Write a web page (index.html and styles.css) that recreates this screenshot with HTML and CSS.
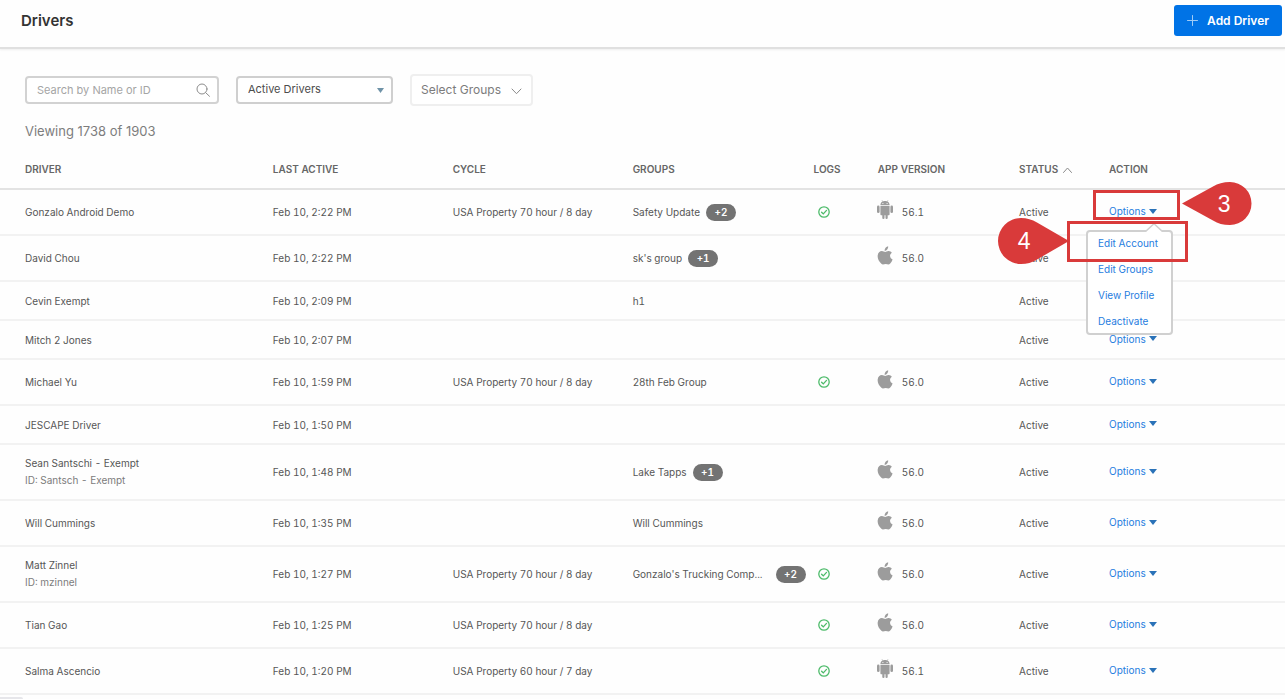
FILE: index.html
```html
<!DOCTYPE html>
<html lang="en">
<head>
<meta charset="utf-8">
<title>Drivers</title>
<link rel="stylesheet" href="styles.css">
</head>
<body>
<svg class="sprite" aria-hidden="true">
	<symbol id="apple" viewBox="0 0 16 20">
		<path d="M11.3 0.3c.2 1.3-.3 2.5-1 3.400-.7.9-1.800 1.500-2.700 1.400-.2-1.200.4-2.400 1-3.200.8-.9 1.900-1.500 2.700-1.600z"/>
		<path d="M8.300 6.200c.8 0 1.900-1 3.600-.9 1.400.1 2.500.6 3.300 1.700-2.900 1.800-2.300 5.900.8 7.100-.6 1.700-1.400 3.200-2.500 4.400-1.700 1.800-2.800.5-4.700.5-2 0-3 1.200-4.600-.2C1.400 16.400 0 13 .3 10.100.6 7 2.500 5.400 4.700 5.300c1.500 0 2.600.9 3.600.9z"/>
	</symbol>
	<symbol id="android" viewBox="0 0 16 19">
		<path d="M3.400 5.200c0-1.700.8-2.900 2.100-3.600L4.600.3l.4-.2.9 1.300c1.300-.5 2.900-.5 4.200 0l.9-1.300.4.2-.9 1.300c1.300.7 2.100 1.900 2.100 3.600z"/>
		<path d="M3.400 6h9.200v8.300c0 .6-.4 1-1 1h-.9v2.600a1.100 1.100 0 0 1-2.200 0v-2.600h-1v2.600a1.100 1.100 0 0 1-2.200 0v-2.600h-.9c-.6 0-1-.4-1-1z"/>
		<rect x="0" y="5.600" width="2.600" height="7.400" rx="1.300"/>
		<rect x="13.400" y="5.600" width="2.600" height="7.400" rx="1.300"/>
		<circle class="eye" cx="5.900" cy="3.500" r=".6"/>
		<circle class="eye" cx="10.100" cy="3.500" r=".6"/>
	</symbol>
	<symbol id="check" viewBox="0 0 12 12">
		<circle cx="6" cy="6" r="5.200"/>
		<path d="M3.600 6.200l1.700 1.700 3.200-3.500"/>
	</symbol>
</svg>

<header class="topbar">
	<h1>Drivers</h1>
	<button type="button" class="add_btn">
		<svg width="11" height="11" viewBox="0 0 11 11"><path d="M5.500 .5v10M.5 5.500h10"/></svg>
		Add Driver
	</button>
</header>

<div class="filters">
	<div class="search">
		<input type="text" placeholder="Search by Name or ID" aria-label="Search by Name or ID">
		<svg width="14" height="14" viewBox="0 0 14 14"><circle cx="6" cy="6" r="5"/><path d="M9.700 9.700l3.800 3.600"/></svg>
	</div>
	<div class="status_filter">
		<select aria-label="Driver status">
			<option>Active Drivers</option>
		</select>
		<svg width="7" height="5" viewBox="0 0 7 5"><path d="M0 0h7L3.500 5z"/></svg>
	</div>
	<button type="button" class="groups_btn">
		Select Groups
		<svg width="11" height="7" viewBox="0 0 11 7"><path d="M1 1l4.500 4.700L10 1"/></svg>
	</button>
</div>

<p class="viewing">Viewing 1738 of 1903</p>

<table class="drivers">
	<colgroup>
		<col class="c_driver"><col class="c_wide"><col class="c_wide"><col class="c_wide">
		<col class="c_logs"><col class="c_app"><col class="c_status"><col class="c_action">
	</colgroup>
	<thead>
		<tr>
			<th>DRIVER</th>
			<th>LAST ACTIVE</th>
			<th>CYCLE</th>
			<th>GROUPS</th>
			<th>LOGS</th>
			<th>APP VERSION</th>
			<th>STATUS <svg class="sort" width="9" height="6" viewBox="0 0 9 6"><path d="M.5 5.500l4-4.500 4 4.500"/></svg></th>
			<th>ACTION</th>
		</tr>
	</thead>
	<tbody>
		<tr class="device">
			<td>Gonzalo Android Demo</td>
			<td>Feb 10, 2:22 PM</td>
			<td>USA Property 70 hour / 8 day</td>
			<td><div class="groups"><span class="group">Safety Update</span><span class="more">+2</span></div></td>
			<td><svg class="check"><use href="#check"/></svg></td>
			<td><div class="app"><svg class="os"><use href="#android"/></svg>56.1</div></td>
			<td>Active</td>
			<td>
				<div class="action">
					<button type="button" class="options">Options</button>
					<div class="menu">
						<svg class="menu_tip" width="18" height="9" viewBox="0 0 18 9"><path d="M0 9L9 .7 18 9"/></svg>
						<a href="#">Edit Account</a>
						<a href="#">Edit Groups</a>
						<a href="#">View Profile</a>
						<a href="#">Deactivate</a>
					</div>
					<div class="frame frame_3"></div>
					<div class="frame frame_4"></div>
					<div class="pin pin_3">
						<svg width="70" height="43" viewBox="0 0 70 43"><path d="M0 21.500L31 4.500C36 1.500 41 0 48 0a21.500 21.500 0 0 1 0 43c-7 0-12-1.500-17-4.500z"/></svg>
						<span>3</span>
					</div>
					<div class="pin pin_4">
						<svg width="71" height="46" viewBox="0 0 71 46"><path d="M71 23L39 4.500C34 1.500 29 0 23 0a23 23 0 0 0 0 46c6 0 11-1.500 16-4.500z"/></svg>
						<span>4</span>
					</div>
				</div>
			</td>
		</tr>
		<tr class="device">
			<td>David Chou</td>
			<td>Feb 10, 2:22 PM</td>
			<td></td>
			<td><div class="groups"><span class="group">sk's group</span><span class="more">+1</span></div></td>
			<td></td>
			<td><div class="app"><svg class="os"><use href="#apple"/></svg>56.0</div></td>
			<td>Active</td>
			<td><button type="button" class="options covered">Options</button></td>
		</tr>
		<tr>
			<td>Cevin Exempt</td>
			<td>Feb 10, 2:09 PM</td>
			<td></td>
			<td>h1</td>
			<td></td>
			<td></td>
			<td>Active</td>
			<td><button type="button" class="options covered">Options</button></td>
		</tr>
		<tr>
			<td>Mitch 2 Jones</td>
			<td>Feb 10, 2:07 PM</td>
			<td></td>
			<td></td>
			<td></td>
			<td></td>
			<td>Active</td>
			<td><button type="button" class="options">Options</button></td>
		</tr>
		<tr class="device">
			<td>Michael Yu</td>
			<td>Feb 10, 1:59 PM</td>
			<td>USA Property 70 hour / 8 day</td>
			<td>28th Feb Group</td>
			<td><svg class="check"><use href="#check"/></svg></td>
			<td><div class="app"><svg class="os"><use href="#apple"/></svg>56.0</div></td>
			<td>Active</td>
			<td><button type="button" class="options">Options</button></td>
		</tr>
		<tr>
			<td>JESCAPE Driver</td>
			<td>Feb 10, 1:50 PM</td>
			<td></td>
			<td></td>
			<td></td>
			<td></td>
			<td>Active</td>
			<td><button type="button" class="options">Options</button></td>
		</tr>
		<tr class="with_id">
			<td>Sean Santschi - Exempt<div class="driver_id">ID: Santsch - Exempt</div></td>
			<td>Feb 10, 1:48 PM</td>
			<td></td>
			<td><div class="groups"><span class="group">Lake Tapps</span><span class="more">+1</span></div></td>
			<td></td>
			<td><div class="app"><svg class="os"><use href="#apple"/></svg>56.0</div></td>
			<td>Active</td>
			<td><button type="button" class="options">Options</button></td>
		</tr>
		<tr class="device">
			<td>Will Cummings</td>
			<td>Feb 10, 1:35 PM</td>
			<td></td>
			<td>Will Cummings</td>
			<td></td>
			<td><div class="app"><svg class="os"><use href="#apple"/></svg>56.0</div></td>
			<td>Active</td>
			<td><button type="button" class="options">Options</button></td>
		</tr>
		<tr class="with_id">
			<td>Matt Zinnel<div class="driver_id">ID: mzinnel</div></td>
			<td>Feb 10, 1:27 PM</td>
			<td>USA Property 70 hour / 8 day</td>
			<td><div class="groups full"><span class="group">Gonzalo's Trucking Comp...</span><span class="more">+2</span></div></td>
			<td><svg class="check"><use href="#check"/></svg></td>
			<td><div class="app"><svg class="os"><use href="#apple"/></svg>56.0</div></td>
			<td>Active</td>
			<td><button type="button" class="options">Options</button></td>
		</tr>
		<tr class="device">
			<td>Tian Gao</td>
			<td>Feb 10, 1:25 PM</td>
			<td>USA Property 70 hour / 8 day</td>
			<td></td>
			<td><svg class="check"><use href="#check"/></svg></td>
			<td><div class="app"><svg class="os"><use href="#apple"/></svg>56.0</div></td>
			<td>Active</td>
			<td><button type="button" class="options">Options</button></td>
		</tr>
		<tr class="device">
			<td>Salma Ascencio</td>
			<td>Feb 10, 1:20 PM</td>
			<td>USA Property 60 hour / 7 day</td>
			<td></td>
			<td><svg class="check"><use href="#check"/></svg></td>
			<td><div class="app"><svg class="os"><use href="#android"/></svg>56.1</div></td>
			<td>Active</td>
			<td><button type="button" class="options">Options</button></td>
		</tr>
	</tbody>
</table>
<div class="status_tab"></div>
</body>
</html>
```

FILE: styles.css
```css
* {margin: 0; padding: 0; box-sizing: border-box;}
body {background: #fefefe; color: #565656; font-family: Inter, "Liberation Sans", sans-serif; font-size: 10px; line-height: 16px;}
button, input, select {font-family: inherit; color: inherit;}
svg {flex: none; fill: none; stroke-linecap: round;}
.sprite {position: absolute; width: 0; height: 0;}

.topbar {display: flex; justify-content: space-between; align-items: center; height: 49px; padding: 0 3px 6px 21px; border-bottom: 2px solid #e0e0e0; box-shadow: 0 1px 2px #eee;}
.topbar h1 {font-size: 15px; font-weight: 600; line-height: 20px; color: #333;}
.add_btn {display: flex; align-items: center; gap: 9px; height: 31px; padding: 0 13px; border: 0; border-radius: 3px; background: #0073e6; color: #fff; font-size: 12px; font-weight: 600;}
.add_btn svg {stroke: #9fcbf6;}

.filters {display: flex; align-items: center; gap: 17px; padding: 25px 25px 0;}
.search, .status_filter {display: flex; position: relative; align-items: center;}
.search input {width: 194px; height: 28px; padding: 0 34px 0 10px; border: 2px solid #d2d2d2; border-radius: 4px; background: #fff; font-size: 11px;}
.search input::placeholder {color: #a5a5a5;}
.search svg {position: absolute; right: 9px; stroke: #8c8c8c;}
.status_filter select {width: 157px; height: 28px; padding: 0 24px 2px 10px; appearance: none; border: 2px solid #cfcfcf; border-radius: 4px; background: #fff; color: #4c4c4c; font-size: 11px;}
.status_filter svg {position: absolute; right: 9px; fill: #6f93a8; pointer-events: none;}
.groups_btn {display: flex; align-items: center; gap: 10px; height: 32px; padding: 0 9px 2px; border: 2px solid #efefef; border-radius: 4px; background: #fff; color: #7c7c7c; font-size: 12px;}
.groups_btn svg {margin-top: 4px; stroke: #8a8a8a;}

.viewing {padding: 15px 25px 0; color: #7d7d7d; font-size: 13px; line-height: 20px;}

.drivers {width: 100%; margin-top: 9px; table-layout: fixed; border-collapse: separate; border-spacing: 0;}
.c_driver {width: 21%;}
.c_wide {width: 14%;}
.c_logs {width: 5%;}
.c_app {width: 11%;}
.c_status {width: 7%;}
.c_action {width: 14%;}
.drivers th, .drivers td {height: 39px; padding-left: 3px; border-bottom: 2px solid #f2f2f2; text-align: left; vertical-align: middle; white-space: nowrap; font-variant-numeric: tabular-nums;}
.drivers th:first-child, .drivers td:first-child {padding-left: 25px;}
.drivers th:nth-child(n+5), .drivers td:nth-child(n+5) {padding-left: 4px;}
.drivers td:last-child {padding-bottom: 2px;}
.drivers th {height: 40px; border-bottom-color: #e3e3e3; color: #666; font-weight: 600;}
.drivers .device td {height: 46px;}
.drivers .with_id td {height: 56px; line-height: 17px;}
.sort {margin-left: 2px; stroke: #8a8a8a;}
.driver_id {color: #7c7c7c;}

.groups {display: flex; align-items: center; gap: 6px;}
.groups.full {justify-content: space-between; margin-right: 4px;}
.more {flex: none; width: 30px; height: 17px; border-radius: 9px; background: #737373; color: #fff; font-weight: 600; line-height: 17px; text-align: center;}
.check {display: block; width: 12px; height: 12px; margin-left: 4px; stroke: #4dbb6a; stroke-width: 1.3px;}
.app {display: flex; align-items: center; gap: 9px;}
.os {width: 16px; height: 19px; margin: 0 0 5px -1px; fill: #9c9c9c;}
.eye {fill: #fff;}

.action {position: relative;}
.options {display: flex; align-items: center; gap: 3px; border: 0; background: none; color: #1f7de0; font-size: 10px; line-height: 16px;}
.options::after {content: ""; border: 4px solid transparent; border-top: 5px solid #2a72b8; border-bottom: 0;}
/* rows lying under the open menu */
.covered {visibility: hidden;}

.menu {display: flex; position: absolute; z-index: 1; top: 27px; left: -23px; flex-direction: column; gap: 10px; width: 87px; padding: 3px 0 4px 10px; border: 2px solid #d0d0d0; border-radius: 4px; background: #fff;}
.menu a {color: #1f7de0; text-decoration: none;}
.menu_tip {position: absolute; top: -9px; left: 57px; fill: #fff; stroke: #d0d0d0; stroke-width: 1.5px;}

/* numbered step markers */
.frame {position: absolute; z-index: 2; border: 3px solid #d93a3a; pointer-events: none;}
.frame_3 {top: -13px; left: -16px; width: 87px; height: 30px;}
.frame_4 {top: 18px; left: -42px; width: 121px; height: 41px;}
.pin {position: absolute; z-index: 3; color: #fff; font: 23px/44px "Liberation Sans", Arial, sans-serif; text-align: center;}
.pin svg {display: block; fill: #d93a3a;}
.pin span {position: absolute; top: 0; width: 44px;}
.pin_3 {top: -21px; left: 73px;}
.pin_3 span {right: 6px;}
.pin_4 {top: 15px; left: -111px; line-height: 46px;}
.pin_4 span {left: 4px;}

.status_tab {position: fixed; bottom: 0; left: 0; width: 23px; height: 2px; border-radius: 0 2px 0 0; background: #e6e6ea;}
```
